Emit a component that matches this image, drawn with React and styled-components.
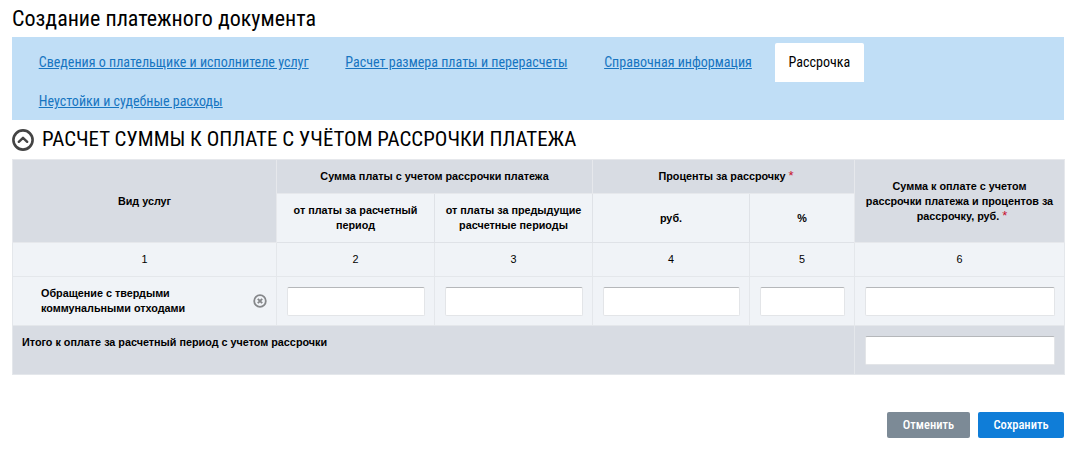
import React from 'react';
import styled, { createGlobalStyle } from 'styled-components';

const GlobalStyle = createGlobalStyle`
  html, body {
    margin: 0;
    padding: 0;
    background: #fff;
  }
  body {
    font-family: "Liberation Sans", Arial, sans-serif;
    color: #000;
  }
`;

const Page = styled.div`
  width: 1072px;
  height: 451px;
  box-sizing: border-box;
  padding: 0 8px 0 12px;
  overflow: hidden;
`;

const Title = styled.h1`
  margin: 0;
  height: 37px;
  font: 400 22px/37px Roboto, sans-serif;
  font-stretch: condensed;
`;

const Tabs = styled.nav`
  display: flex;
  flex-wrap: wrap;
  column-gap: 8.7px;
  height: 83px;
  box-sizing: border-box;
  padding: 6px 60px 0 12.7px;
  background: #c0def6;
  overflow: hidden;
`;

const Tab = styled.a`
  display: block;
  height: ${(props) => (props.$active ? '39px' : '38px')};
  padding: 0 14px;
  font: 400 14.05px/39px Roboto, sans-serif;
  font-stretch: condensed;
  white-space: nowrap;
  color: ${(props) => (props.$active ? '#000' : '#1775c1')};
  text-decoration: ${(props) => (props.$active ? 'none' : 'underline')};
  background: ${(props) => (props.$active ? '#fff' : 'transparent')};
  border-radius: 2px 2px 0 0;
`;

const SectionHeader = styled.div`
  display: flex;
  align-items: center;
  gap: 8px;
  height: 39px;
`;

const SectionTitle = styled.h2`
  margin: 0;
  font: 400 20.95px/41px Roboto, sans-serif;
  font-stretch: condensed;
  text-transform: uppercase;
  white-space: nowrap;
`;

const Table = styled.table`
  width: 1052px;
  table-layout: fixed;
  border-collapse: collapse;
  font-size: 10.8px;
  line-height: 15px;
`;

const HeadCell = styled.th`
  height: ${(props) => props.$h || 'auto'};
  padding: 0 6px;
  font-weight: 700;
  text-align: center;
  vertical-align: middle;
  background: ${(props) => (props.$light ? '#f0f3f7' : '#d8dce3')};
  border: 1px solid ${(props) => (props.$light ? '#dfe2e7' : '#e6e8ec')};
`;

const NumCell = styled.td`
  height: 33px;
  padding: 0;
  text-align: center;
  background: #f0f3f7;
  border: 1px solid #e4e7eb;
`;

const FieldCell = styled.td`
  padding: 0 9px 0 10px;
  background: ${(props) => (props.$dark ? '#d8dce3' : '#f0f3f7')};
  border: 1px solid #e4e7eb;
`;

const ServiceCell = styled.td`
  height: 48px;
  padding: 0 9px 0 28px;
  background: #f0f3f7;
  border: 1px solid #e4e7eb;
`;

const ServiceRow = styled.div`
  display: flex;
  align-items: center;
  justify-content: space-between;
  font-weight: 700;
  svg {
    margin-top: -1px;
  }
`;

const TotalCell = styled.td`
  height: 39px;
  padding: 9px 9px 0;
  vertical-align: top;
  font-weight: 700;
  background: #d8dce3;
  border: 1px solid #e4e7eb;
`;

const Field = styled.input`
  display: block;
  width: 100%;
  height: 29px;
  box-sizing: border-box;
  margin: 0;
  padding: 0 6px;
  background: #fff;
  border: 1px solid #e3e5e8;
  border-top: 1px solid #b5b7ba;
  border-radius: 2px;
  outline: none;
`;

const Required = styled.span`
  display: inline-block;
  width: 0;
  margin-left: 3px;
  color: #c8102e;
  font-size: 13px;
  line-height: 10px;
  font-weight: 400;
`;

const Actions = styled.div`
  display: flex;
  justify-content: flex-end;
  gap: 8px;
  margin-top: 37px;
`;

const Button = styled.button`
  height: 26px;
  padding: 0;
  width: ${(props) => props.$w};
  border: 0;
  border-radius: 2px;
  color: #fff;
  background: ${(props) => (props.$primary ? '#0f7dd8' : '#7c8a96')};
  font: 500 12.5px/26px Roboto, sans-serif;
  font-stretch: condensed;
`;

const CollapseIcon = () => (
  <svg width="22" height="22" viewBox="0 0 22 22" fill="none">
    <circle cx="11" cy="11" r="9.6" stroke="#444" strokeWidth="2.6" />
    <path d="M6.8 12.8 L11 8.8 L15.2 12.8" stroke="#444" strokeWidth="2.4" strokeLinecap="round" strokeLinejoin="round" />
  </svg>
);

const RemoveIcon = () => (
  <svg width="14" height="14" viewBox="0 0 14 14" fill="none">
    <circle cx="7" cy="7" r="5.8" stroke="#85878a" strokeWidth="1.8" />
    <path d="M4.8 4.8 L9.2 9.2 M9.2 4.8 L4.8 9.2" stroke="#85878a" strokeWidth="1.9" />
  </svg>
);

const tabs = [
  'Сведения о плательщике и исполнителе услуг',
  'Расчет размера платы и перерасчеты',
  'Справочная информация',
  'Рассрочка',
  'Неустойки и судебные расходы',
];

const columnWidths = [264, 158, 158, 157, 105, 210];

export default function App() {
  return (
    <Page>
      <GlobalStyle />
      <Title>Создание платежного документа</Title>
      <Tabs>
        {tabs.map((tab) => (
          <Tab key={tab} $active={tab === 'Рассрочка'}>{tab}</Tab>
        ))}
      </Tabs>
      <SectionHeader>
        <CollapseIcon />
        <SectionTitle>Расчет суммы к оплате с учётом рассрочки платежа</SectionTitle>
      </SectionHeader>
      <Table>
        <colgroup>
          {columnWidths.map((w, i) => <col key={i} width={w} />)}
        </colgroup>
        <thead>
          <tr>
            <HeadCell rowSpan={2}>Вид услуг</HeadCell>
            <HeadCell colSpan={2} $h="33px">Сумма платы с учетом рассрочки платежа</HeadCell>
            <HeadCell colSpan={2} $h="33px">Проценты за рассрочку<Required>*</Required></HeadCell>
            <HeadCell rowSpan={2}>
              Сумма к оплате с учетом<br />
              рассрочки платежа и процентов за<br />
              рассрочку, руб.<Required>*</Required>
            </HeadCell>
          </tr>
          <tr>
            <HeadCell $light $h="48px">от платы за расчетный период</HeadCell>
            <HeadCell $light>от платы за предыдущие расчетные периоды</HeadCell>
            <HeadCell $light>руб.</HeadCell>
            <HeadCell $light>%</HeadCell>
          </tr>
        </thead>
        <tbody>
          <tr>
            {[1, 2, 3, 4, 5, 6].map((n) => <NumCell key={n}>{n}</NumCell>)}
          </tr>
          <tr>
            <ServiceCell>
              <ServiceRow>
                <span>Обращение с твердыми<br />коммунальными отходами</span>
                <RemoveIcon />
              </ServiceRow>
            </ServiceCell>
            {[2, 3, 4, 5, 6].map((n) => (
              <FieldCell key={n}><Field aria-label={`Колонка ${n}`} /></FieldCell>
            ))}
          </tr>
          <tr>
            <TotalCell colSpan={5}>Итого к оплате за расчетный период с учетом рассрочки</TotalCell>
            <FieldCell $dark><Field aria-label="Итого" /></FieldCell>
          </tr>
        </tbody>
      </Table>
      <Actions>
        <Button $w="83px">Отменить</Button>
        <Button $primary $w="86px">Сохранить</Button>
      </Actions>
    </Page>
  );
}
